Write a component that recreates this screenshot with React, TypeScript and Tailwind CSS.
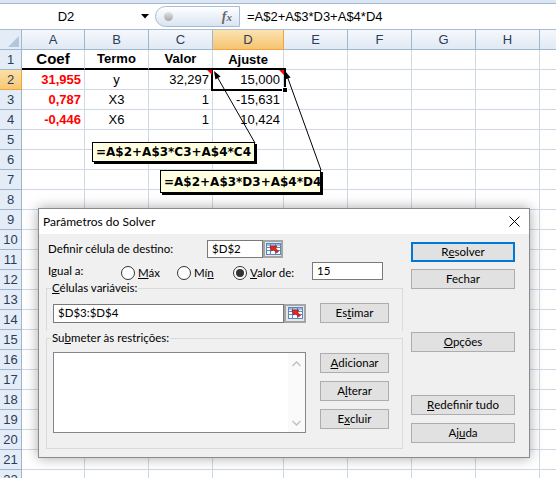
import React from 'react';

type Col = { l: string; w: string };
const cols: Col[] = [
  { l: 'A', w: 'w-[63px]' },
  { l: 'B', w: 'w-[64px]' },
  { l: 'C', w: 'w-[64px]' },
  { l: 'D', w: 'w-[71px]' },
  { l: 'E', w: 'w-[64px]' },
  { l: 'F', w: 'w-[64px]' },
  { l: 'G', w: 'w-[64px]' },
  { l: 'H', w: 'w-[64px]' },
  { l: '', w: 'w-[64px]' },
];

type CellSpec = { t: string; c: string };
const B = 'justify-center font-bold';
const R = 'justify-end';
const RED = 'justify-end font-bold text-[#ff0000]';
const C = 'justify-center';
const data: Record<number, CellSpec[]> = {
  1: [
    { t: 'Coef', c: B + ' text-[15px] border-b-2 border-b-black' },
    { t: 'Termo', c: B + ' border-b-2 border-b-black' },
    { t: 'Valor', c: B + ' border-b-2 border-b-black' },
    { t: 'Ajuste', c: B },
  ],
  2: [
    { t: '31,955', c: RED },
    { t: 'y', c: C },
    { t: '32,297', c: R },
    { t: '15,000', c: R },
  ],
  3: [
    { t: '0,787', c: RED },
    { t: 'X3', c: C },
    { t: '1', c: R },
    { t: '-15,631', c: R },
  ],
  4: [
    { t: '-0,446', c: RED },
    { t: 'X6', c: C },
    { t: '1', c: R },
    { t: '10,424', c: R },
  ],
};

const rows = Array.from({ length: 22 }, (_, i) => i + 1);

function RefIcon() {
  return (
    <svg width="15" height="12" viewBox="0 0 15 12">
      <rect x="0.5" y="0.5" width="14" height="11" fill="#ffffff" stroke="#5a87c0" />
      <rect x="1" y="1" width="13" height="2" fill="#9cb9e0" />
      <line x1="0.5" y1="4.5" x2="14.5" y2="4.5" stroke="#5a87c0" />
      <line x1="0.5" y1="7.5" x2="14.5" y2="7.5" stroke="#5a87c0" />
      <line x1="4.5" y1="0.5" x2="4.5" y2="11.5" stroke="#5a87c0" />
      <line x1="9.5" y1="0.5" x2="9.5" y2="11.5" stroke="#5a87c0" />
      <path d="M4 3 L11 3 L9.5 5 L12.5 8.5 L10.5 10 L7.5 6.5 L5.5 8 Z" fill="#e02a1e" stroke="#9a1010" strokeWidth="0.6" />
    </svg>
  );
}

function RefBtn({ w, h }: { w: string; h: string }) {
  return (
    <div className={`${w} ${h} shrink-0 border-2 border-[#a5a5a5] bg-[#e6e6e6] flex items-center justify-center`}>
      <RefIcon />
    </div>
  );
}

function Btn({ children, className = '', def = false }: { children: React.ReactNode; className?: string; def?: boolean }) {
  return (
    <button
      className={`h-[20px] flex items-center justify-center bg-[#e1e1e1] text-[11.5px] leading-none ${
        def ? 'border-2 border-[#0078d7]' : 'border border-[#adadad]'
      } ${className}`}
    >
      {children}
    </button>
  );
}

function Radio({ checked = false, children, w }: { checked?: boolean; children: React.ReactNode; w: string }) {
  return (
    <div className={`flex items-center ${w} shrink-0 pt-[3px]`}>
      <span className="w-[14px] h-[14px] rounded-full border border-[#333333] bg-white flex items-center justify-center shrink-0">
        {checked && <span className="w-[8px] h-[8px] rounded-full bg-[#333333]" />}
      </span>
      <span className="ml-[3px]">{children}</span>
    </div>
  );
}

function Chevron({ up }: { up: boolean }) {
  return (
    <svg width="9" height="6" viewBox="0 0 9 6">
      <path d={up ? 'M0.5 5 L4.5 1 L8.5 5' : 'M0.5 1 L4.5 5 L8.5 1'} fill="none" stroke="#bfbfbf" strokeWidth="1.3" />
    </svg>
  );
}

function Dialog() {
  return (
    <div className="absolute left-[38px] top-[208px] w-[492px] h-[250px] border border-[#8a8a8a] bg-[#f0f0f0] shadow-[0_0_12px_rgba(0,0,0,0.35)] flex flex-col font-['Lato',sans-serif] text-[11.5px] text-black">
      <div className="h-[25px] shrink-0 bg-white flex items-center justify-between pl-[4px] pr-[9px] text-[12px]">
        <span>Parâmetros do Solver</span>
        <svg width="11" height="11" viewBox="0 0 11 11">
          <path d="M0.5 0.5 L10.5 10.5 M10.5 0.5 L0.5 10.5" stroke="#000" strokeWidth="1" />
        </svg>
      </div>
      <div className="flex flex-1">
        <div className="w-[364px] shrink-0 flex flex-col">
          <div className="flex items-center mt-[6px] h-[18px]">
            <div className="ml-[9px] w-[159px]">Definir célula de destino:</div>
            <div className="w-[56px] h-[18px] border border-[#7a7a7a] bg-white flex items-center px-[4px]">$D$2</div>
            <RefBtn w="w-[20px]" h="h-[18px]" />
          </div>
          <div className="flex items-center mt-[4px] h-[18px]">
            <div className="ml-[9px] w-[73px] shrink-0">Igual a:</div>
            <Radio w="w-[56px]">
              <span className="underline">M</span>áx
            </Radio>
            <Radio w="w-[56px]">
              Mí<span className="underline">n</span>
            </Radio>
            <Radio w="w-[79px]" checked>
              <span className="underline">V</span>alor de:
            </Radio>
            <div className="w-[71px] h-[18px] border border-[#7a7a7a] bg-white flex items-center px-[4px]">15</div>
          </div>
          <fieldset className="ml-[7px] mt-[1px] w-[357px] h-[50px] border border-b-0 border-[#dadada]">
            <legend className="ml-[4px] px-[1px] leading-[14px]">
              <span className="underline">C</span>élulas variáveis:
            </legend>
            <div className="flex items-center mt-[8px]">
              <div className="ml-[6px] w-[231px] h-[19px] border border-[#7a7a7a] bg-white flex items-center px-[4px]">$D$3:$D$4</div>
              <RefBtn w="w-[22px]" h="h-[19px]" />
              <Btn className="ml-[14px] w-[69px]">
                Es<span className="underline">t</span>imar
              </Btn>
            </div>
          </fieldset>
          <fieldset className="ml-[7px] w-[357px] h-[118px] border border-[#dadada]">
            <legend className="ml-[4px] px-[1px] leading-[14px]">
              Su<span className="underline">b</span>meter às restrições:
            </legend>
            <div className="flex mt-[7px]">
              <div className="ml-[6px] w-[253px] h-[81px] border border-[#828790] bg-white flex justify-end">
                <div className="w-[17px] h-full bg-[#fafafa] flex flex-col items-center justify-between pt-[8px] pb-[6px]">
                  <Chevron up />
                  <Chevron up={false} />
                </div>
              </div>
              <div className="ml-[14px] mt-[1px] flex flex-col gap-[8px]">
                <Btn className="w-[69px]">
                  <span className="underline">A</span>dicionar
                </Btn>
                <Btn className="w-[69px]">
                  A<span className="underline">l</span>terar
                </Btn>
                <Btn className="w-[69px]">
                  E<span className="underline">x</span>cluir
                </Btn>
              </div>
            </div>
          </fieldset>
        </div>
        <div className="ml-[8px] w-[104px] flex flex-col">
          <Btn def className="mt-[8px] w-[104px]">
            R<span className="underline">e</span>solver
          </Btn>
          <Btn className="mt-[7px] w-[104px]">Fechar</Btn>
          <Btn className="mt-[43px] w-[104px]">
            <span className="underline">O</span>pções
          </Btn>
          <Btn className="mt-[43px] w-[104px]">
            <span className="underline">R</span>edefinir tudo
          </Btn>
          <Btn className="mt-[8px] w-[104px]">
            Aj<span className="underline">u</span>da
          </Btn>
        </div>
      </div>
    </div>
  );
}

export default function App() {
  return (
    <div className="relative w-[556px] h-[478px] overflow-hidden bg-white font-['Liberation_Sans',Arial,sans-serif] text-[13px] text-black">
      {/* formula bar */}
      <div className="h-[4px] bg-[#dde7f4] border-b border-[#a3b8d4]" />
      <div className="h-[26px] flex items-center bg-white border-b border-[#a9bcd4]">
        <div className="w-[132px] flex justify-center">D2</div>
        <svg width="8" height="5" viewBox="0 0 8 5" className="ml-[9px]">
          <path d="M0 0 L8 0 L4 4.5 Z" fill="#000" />
        </svg>
        <div className="ml-[6px] w-[85px] h-[21px] rounded-l-full border border-[#a7bbd5] bg-linear-to-b from-[#ffffff] to-[#d9e4f2] flex items-center justify-between pl-[8px] pr-[7px]">
          <span className="w-[9px] h-[9px] rounded-full bg-linear-to-b from-[#e4e4e4] to-[#a8a8a8]" />
          <span className="italic font-bold font-['Liberation_Serif',serif] text-[14px] text-[#6b6b6b]">
            f<span className="text-[11px]">x</span>
          </span>
        </div>
        <div className="pl-[7px]">=A$2+A$3*D3+A$4*D4</div>
      </div>

      {/* column header */}
      <div className="flex h-[20px]">
        <div className="w-[22px] shrink-0 h-full border-r border-b border-[#9eb6ce] bg-[#e4ecf7] flex items-end justify-end p-[2px]">
          <svg width="11" height="11" viewBox="0 0 11 11">
            <path d="M11 0 L11 11 L0 11 Z" fill="#b4c6dc" />
          </svg>
        </div>
        {cols.map((c, i) =>
          c.l === 'D' ? (
            <div
              key={i}
              className={`${c.w} shrink-0 h-full border-r border-b border-[#f2a33d] bg-linear-to-b from-[#fbe3b2] to-[#f6c46e] flex items-center justify-center text-[#2a3d59]`}
            >
              {c.l}
            </div>
          ) : (
            <div
              key={i}
              className={`${c.w} shrink-0 h-full border-r border-b border-[#9eb6ce] bg-linear-to-b from-[#f5f8fc] to-[#e1e9f4] flex items-center justify-center text-[#2a3d59]`}
            >
              {c.l}
            </div>
          )
        )}
      </div>

      {/* rows */}
      {rows.map((r) => (
        <div key={r} className="flex h-[20px]">
          <div
            className={`w-[22px] shrink-0 h-full border-r border-b flex items-center justify-center text-[#2a3d59] ${
              r === 2 ? 'bg-linear-to-b from-[#fbdfa6] to-[#f7c873] border-[#f2a33d]' : 'bg-[#e4ecf7] border-[#9eb6ce]'
            }`}
          >
            {r}
          </div>
          {cols.map((c, i) => {
            const cell = data[r]?.[i];
            return (
              <div
                key={i}
                className={`${c.w} shrink-0 h-full border-r border-b border-[#d0d7e5] flex items-center px-[3px] whitespace-nowrap overflow-hidden ${
                  cell ? cell.c : ''
                }`}
              >
                {cell ? cell.t : ''}
              </div>
            );
          })}
        </div>
      ))}

      {/* selection of D2 */}
      <div className="absolute left-[211px] top-[68px] w-[75px] h-[23px] border-2 border-black" />
      <div className="absolute left-[282px] top-[87px] w-[6px] h-[6px] bg-black border border-white" />

      {/* comment arrows and indicators */}
      <svg className="absolute left-0 top-0 pointer-events-none" width="556" height="478" viewBox="0 0 556 478">
        <path d="M207 70 L212 70 L212 75 Z" fill="#ff0000" />
        <path d="M279 70 L284 70 L284 75 Z" fill="#ff0000" />
        <line x1="215" y1="73" x2="255" y2="143" stroke="#000" strokeWidth="1" />
        <path d="M214 71 L220.6 76.5 L215.4 79.4 Z" fill="#000" />
        <line x1="286" y1="73" x2="321" y2="170" stroke="#000" strokeWidth="1" />
        <path d="M285 71 L290.6 77.5 L284.9 79.5 Z" fill="#000" />
      </svg>

      {/* comments */}
      <div className="absolute left-[92px] top-[142px] w-[163px] h-[20px] border border-black bg-[#ffffe1] shadow-[2px_2px_0_#000] flex items-center pl-[3px] font-['DejaVu_Sans',sans-serif] font-bold text-[12px] whitespace-nowrap">
        =A$2+A$3*C3+A$4*C4
      </div>
      <div className="absolute left-[160px] top-[170px] w-[161px] h-[23px] border border-black bg-[#ffffe1] shadow-[2px_2px_0_#000] flex items-start pt-[2px] pl-[3px] font-['DejaVu_Sans',sans-serif] font-bold text-[12px] whitespace-nowrap">
        =A$2+A$3*D3+A$4*D4
      </div>

      <Dialog />
    </div>
  );
}
